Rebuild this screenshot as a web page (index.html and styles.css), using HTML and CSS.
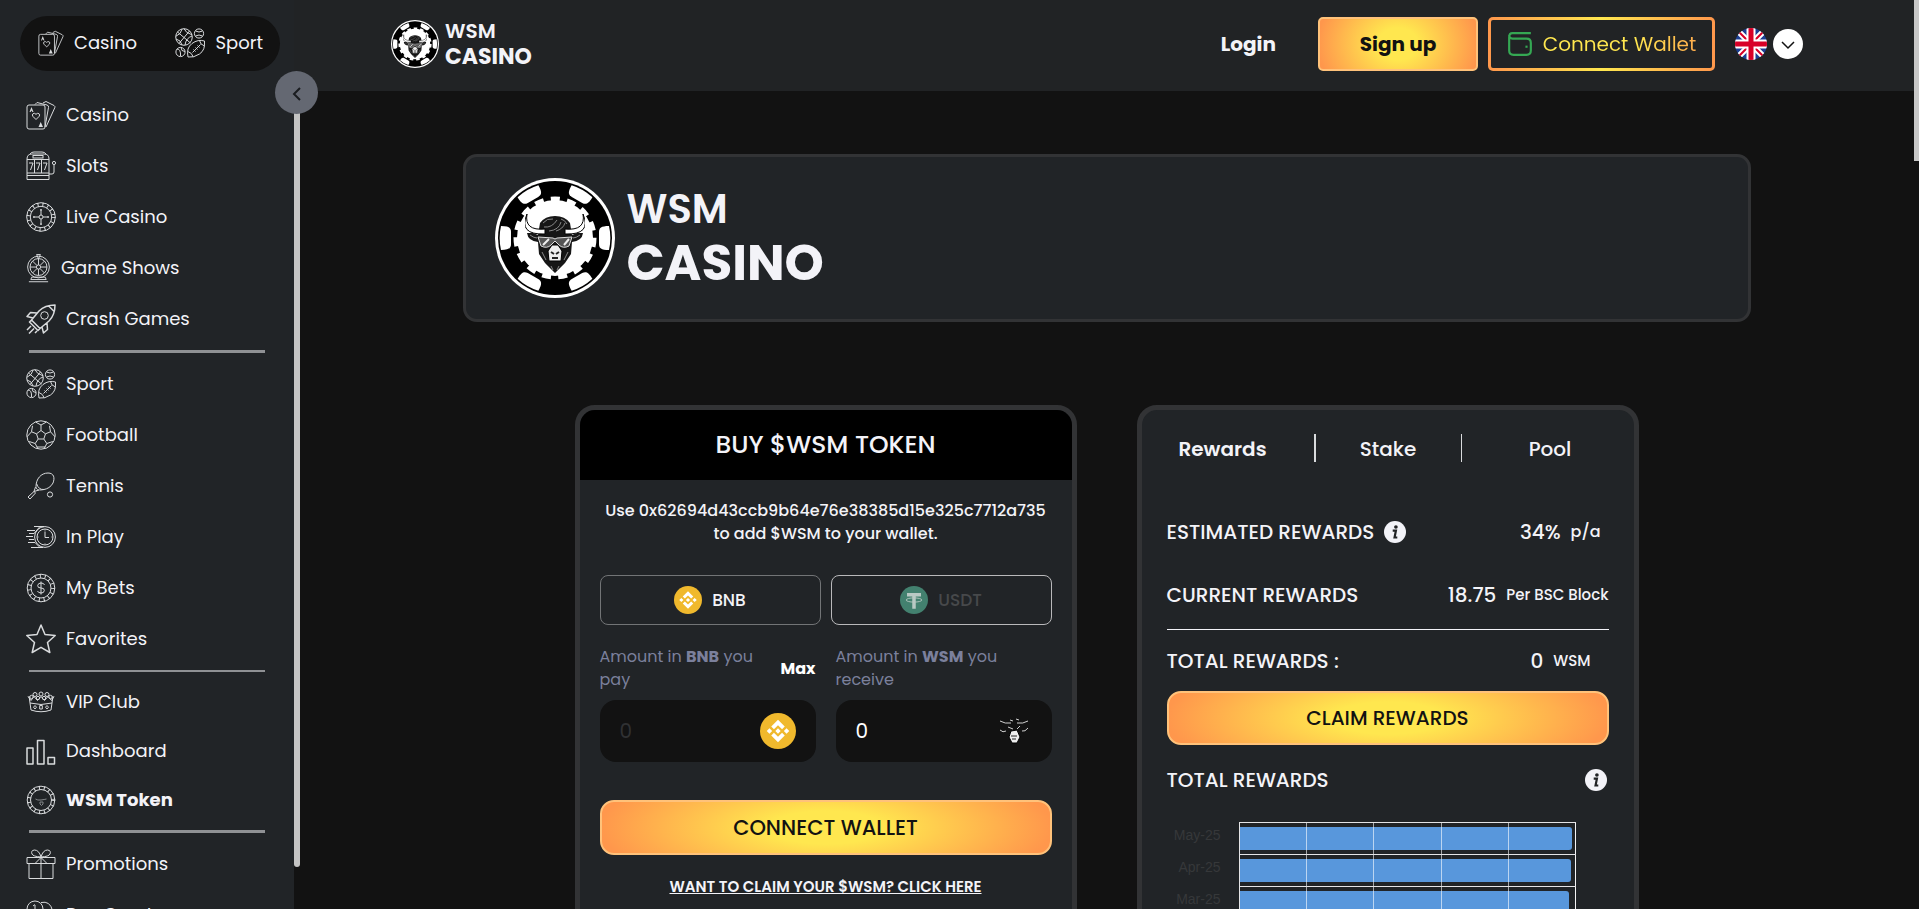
FILE: index.html
```html
<!DOCTYPE html>
<html lang="en">
<head>
    <meta charset="UTF-8">
    <meta name="viewport" content="width=device-width, initial-scale=1.0">
    <title>WSM Casino</title>
    <link rel="stylesheet" href="styles.css">
</head>
<body>
    <!-- icon sprite -->
    <svg class="sprite" aria-hidden="true">
        <symbol id="cards" viewBox="0 0 30 30">
            <rect x="1" y="5" width="18" height="24" rx="2"/>
            <path d="M9 4.500l2-2 10 2.500q2 .6 1.500 2.500L19 27M17 3l3-1.500 8 4q1.400.8.8 2.200L20 27"/>
            <path d="M10 19.500l-3-3q-1.400-1.700 0-2.800 1.600-1 3 .6 1.400-1.600 3-.6 1.400 1.100 0 2.800z"/>
            <path class="solid" d="M3.500 12l2-5 2 5h-1l-1-1.500-1 1.500zM12.500 27l2.200-5 2.300 5z"/>
        </symbol>
        <symbol id="sport" viewBox="0 0 30 30">
            <circle cx="9" cy="9" r="8.300"/>
            <path d="M2.500 4l13 11M4 15.500L14.500 3M7 1.200q-1 5-6 7M17 8q-6 2-7 9M9 .8q1.500 4 8 6M1 11q5 1 6 6"/>
            <circle cx="24" cy="5.500" r="4.600"/><path d="M20.500 3q3.500 2 7 0M20.500 8q3.500-2 7 0"/>
            <circle cx="5.500" cy="24" r="4.600"/><path d="M2 21q4 0 3.500 7M6 19.500q0 4 4 4"/>
            <path d="M13 29q-2-9 4-13.500T29.500 13q1 9-5 13T13 29zM17.500 24.500l8-8M18.500 21.500l2 2M20.500 19.500l2 2M22.500 17.500l2 2M12.800 23.500q4 1 5.500 5.500M24.500 12.500q.5 4 5 5.500"/>
        </symbol>
        <symbol id="slots" viewBox="0 0 30 30">
            <path d="M1 28.500V8q0-5 5-5h12q5 0 5 5v20.500zM1 8.500h22M1 22h22M1 24.500h22M4 3q1-2 4-2h8q3 0 4 2"/>
            <rect x="7" y="4.500" width="10" height="2.500"/>
            <path d="M3 12h4l-2.500 7M10 12h4l-2.500 7M17 12h4l-2.500 7M8.500 9v13M15.500 9v13M23 23h3q2 0 2-2v-7"/>
            <circle cx="28" cy="12" r="1.600"/>
        </symbol>
        <symbol id="roulette" viewBox="0 0 30 30">
            <circle cx="15" cy="15" r="14.300"/><circle cx="15" cy="15" r="10.700"/>
            <circle class="ticks" cx="15" cy="15" r="12.500"/>
            <circle cx="15" cy="15" r="2"/>
            <path d="M15 7v6M15 17v6M7 15h6M17 15h6M14 8h2M14 22h2M8 14v2M22 14v2"/>
        </symbol>
        <symbol id="wheel" viewBox="0 0 26 30">
            <circle cx="13" cy="14" r="11.300"/><circle cx="13" cy="14" r="8.800"/><circle cx="13" cy="14" r="2.200"/>
            <path d="M13 5.200v6.600M13 16.200v6.600M4.200 14h6.600M15.200 14h6.600M6.800 7.800l4.600 4.600M14.600 15.600l4.600 4.600M19.200 7.800l-4.600 4.600M11.400 15.600l-4.600 4.600M11 1h4l-2 4.500zM6 24.500h14l1 2.500H5zM3 29.300h20"/>
        </symbol>
        <symbol id="rocket" viewBox="0 0 30 30">
            <path class="bold" d="M29 1q-10 0-16 6L5.500 16l8.500 8.500L23 17q6-6 6-16zM22.500 1.800l5.700 5.700M11 9L4.500 8.500 1 12.500l6 1.500M21 19l.5 6.500-4 3.500-1.500-6M5.500 16L3.500 18l8.500 8.500 2-2M5 22l-4 4M8 24.500l-5 5M11 27l-2 2"/>
            <circle cx="18.500" cy="11.500" r="3.800"/>
        </symbol>
        <symbol id="football" viewBox="0 0 30 30">
            <circle cx="15" cy="15" r="14.200"/>
            <path d="M15 10.500l4.500 3.300-1.700 5.200h-5.600l-1.700-5.200zM15 10.500V5M19.500 13.800l5-2M17.800 19l3 4.500M12.200 19l-3 4.500M10.500 13.800l-5-2M9.500 2l5.500 3 5.500-3M24.500 11.800l-1-6M24.500 11.800l4.500 5M20.800 23.500l6-2M20.800 23.500L18 29M9.200 23.500L12 29M9.200 23.500l-6-2M5.500 11.800l-4.500 5M5.500 11.800l1-6M11 27h8"/>
        </symbol>
        <symbol id="tennis" viewBox="0 0 30 30">
            <path d="M22 2c6 0 7 5 5 10-2 4-6 6-9 6.500-4 .8-8 1-8-3C10 8 15 2 22 2zM10.500 12.500q2 6.500 7.500 6M9.500 16l-1.500 4.500 5-1.500M2 26l6-5.500 1.500 1.500L4 28z"/>
            <circle cx="24" cy="23.500" r="2.600"/>
        </symbol>
        <symbol id="inplay" viewBox="0 0 30 30">
            <circle cx="19" cy="15" r="10.400"/><circle cx="19" cy="15" r="8"/>
            <path d="M19 9.500V15.500l4 0M19 7.500v1M19 21.500v1M11.500 15h1M25.500 15h1M8 4.500h10M5 25.500h12M1 8.500h8M3 11.500h5M0 14.500h7M3 17.500h5M2 20.500h7M14 4.500L7.500 12M14 25.500l-5-5"/>
        </symbol>
        <symbol id="bets" viewBox="0 0 30 30">
            <circle cx="15" cy="15" r="13.800"/><circle cx="15" cy="15" r="10"/>
            <circle class="ticks" cx="15" cy="15" r="12"/>
            <path d="M18.500 12q-.5-2-3.500-2t-3.300 2.500T15 15t3.300 2.600T15 20t-3.500-2M15 8.500v13"/>
        </symbol>
        <symbol id="star" viewBox="0 0 30 30">
            <path class="bold" d="M15 1l4 9.500 10.200 1-7.700 7 2.300 10L15 23.300l-8.800 5.200 2.300-10-7.700-7 10.200-1z"/>
        </symbol>
        <symbol id="vip" viewBox="0 0 30 30">
            <path d="M3 9l2 14q10 3.500 20 0L27 9M4 16q11 3 22 0M2 9.500l3 4 3-4 3.500 4 3.500-4 3.500 4 3.500-4 3.500 4 2.500-4"/>
            <circle cx="9" cy="7.500" r="2"/><circle cx="15" cy="7" r="2"/><circle cx="21" cy="7.500" r="2"/>
            <circle cx="5.500" cy="10" r="1.700"/><circle cx="12" cy="11" r="1.700"/><circle cx="18" cy="11" r="1.700"/><circle cx="24.500" cy="10" r="1.700"/>
            <path d="M9 18.500l1.500 1.700L9 22l-1.500-1.800zM13.700 18.500h2.600V22h-2.600zM21 18.500l1.500 1.700L21 22l-1.500-1.800z"/>
        </symbol>
        <symbol id="bars" viewBox="0 0 30 30">
            <path class="bold" d="M1 12h6v16H1zM11.500 4.500H18V28h-6.500zM22 21.500h6.500V28H22z"/>
        </symbol>
        <symbol id="token" viewBox="0 0 30 30">
            <circle cx="15" cy="15" r="13.800"/><circle cx="15" cy="15" r="10.500"/>
            <circle class="ticks" cx="15" cy="15" r="12.200"/>
            <path class="faint" d="M9.500 14q2 1.500 5.500 1t5.500-1M14 17h3v2l-1.500 1.500L14 19z"/>
        </symbol>
        <symbol id="gift" viewBox="0 0 30 30">
            <path d="M1 8.500h28v6H1zM3 14.500h24v15H3zM15 8.500v21M15 8q-2-7-6.500-7-4 .5-2.500 4 1 2.500 9 3zM15 8q2-7 6.500-7 4 .5 2.500 4-1 2.500-9 3zM15 8.500L9.500 14M15 8.500l5.500 5.500"/>
        </symbol>
        <symbol id="crypto" viewBox="0 0 30 30">
            <circle cx="9" cy="9" r="8"/><path d="M15 2.500q9-2 11.500 8M9 5v8M7 6l2-1.500"/><circle cx="19" cy="20" r="9"/>
        </symbol>
        <symbol id="bull" viewBox="0 0 60 60">
            <path class="bull-fur" d="M15 9q5-7 15-7t15 7l2 12 5-2h6q-1 8-11 9l-1 12-6 9-10 10-10-10-6-9-1-12Q3 27 2 19h6l5 2z"/>
            <path class="bull-horn" d="M2 0q-3 17 18 15v5Q-7 21 2 0zM58 0q3 17-18 15v5Q67 21 58 0z"/>
            <path class="bull-hair" d="M18 9q4-5 10-4M19 13q8 1 13-7M24 17q10-1 12-9M31 17q7-2 9-8M36 5q4 1 6 5M5 21q4 3 7 3M55 21q-4 3-7 3M17 38l4 8M43 38l-4 8M26 52l2 4M34 52l-2 4"/>
            <path class="bull-glasses" d="M13 23l15 1 2 1 2-1 15-1-3 9q-6 3-10-1l-4-4-4 4q-4 4-10 1z"/>
            <path class="bull-glare" d="M18 31l6-6M39 31l5-6"/>
            <path class="bull-nose" d="M27 31h6l4 6-1 10H24l-1-10z"/>
            <path class="bull-hair dark" d="M26 38l3 2M34 38l-3 2M27 44h6"/>
        </symbol>
        <symbol id="bull-coin" viewBox="0 0 36 36">
            <path class="bull-coin-lines" d="M4 8q5 3 11 2M32 8q-5 3-11 2M4 17q3 3 6 1M32 15q-3 4-6 3M14 7l3 1M20 6l3 1M12 14l5 2M24 13l-3 3"/>
            <path class="bull-nose" d="M15 18l6-1 3 7-3 6h-5l-3-6z"/>
            <path class="bull-coin-dark" d="M15 23l6 0M16 26h4"/>
        </symbol>
        <symbol id="chip" viewBox="0 0 120 120">
            <circle cx="60" cy="60" r="60" fill="#fff"/>
            <circle cx="60" cy="60" r="57" fill="#000"/>
            <g fill="#fff">
                <path id="notch" d="M114 48a54 54 0 0 1 0 24c-8 0-10-2-10-6V54c0-4 2-6 10-6z"/>
                <use href="#notch" transform="rotate(60 60 60)"/>
                <use href="#notch" transform="rotate(120 60 60)"/>
                <use href="#notch" transform="rotate(180 60 60)"/>
                <use href="#notch" transform="rotate(240 60 60)"/>
                <use href="#notch" transform="rotate(300 60 60)"/>
            </g>
            <circle cx="60" cy="60" r="38" fill="#fff"/>
            <circle cx="60" cy="60" r="39" fill="none" stroke="#fff" stroke-width="5" stroke-dasharray="9 7.300"/>
            <use href="#bull" x="30" y="36" width="60" height="60"/>
        </symbol>
        <symbol id="bnb" viewBox="0 0 32 32">
            <circle cx="16" cy="16" r="16" fill="#f0b92d"/>
            <path fill="#fff" d="M16 6l6 6-2.400 2.400L16 10.800l-3.600 3.600L10 12zM16 26l-6-6 2.400-2.400 3.600 3.600 3.600-3.600L22 20zM8.400 13.600l2.400 2.400-2.400 2.400L6 16zM23.600 13.600L26 16l-2.400 2.400-2.400-2.400zM16 13.600l2.400 2.400-2.400 2.400-2.400-2.400z"/>
        </symbol>
        <symbol id="usdt" viewBox="0 0 32 32">
            <circle cx="16" cy="16" r="16" fill="#43816f"/>
            <path fill="#b9c9c4" d="M8 8h16v4h-6v14h-4V12H8z"/>
            <ellipse cx="16" cy="16" rx="9" ry="2.400" fill="none" stroke="#b9c9c4"/>
        </symbol>
        <symbol id="info" viewBox="0 0 24 24">
            <circle cx="12" cy="12" r="12" fill="#f3f3f8"/>
            <circle cx="13" cy="6.500" r="2" fill="#212325"/>
            <path d="M9.500 10.500h3.500l-1.500 7.500h3" fill="none" stroke="#212325" stroke-width="2.400"/>
        </symbol>
    </svg>

    <div class="app">
        <aside class="sidebar">
            <div class="switch">
                <a href="#"><svg class="icon small"><use href="#cards"/></svg>Casino</a>
                <a href="#"><svg class="icon"><use href="#sport"/></svg>Sport</a>
            </div>
            <nav>
                <ul class="menu">
                    <li><a href="#"><svg class="icon"><use href="#cards"/></svg>Casino</a></li>
                    <li><a href="#"><svg class="icon"><use href="#slots"/></svg>Slots</a></li>
                    <li><a href="#"><svg class="icon"><use href="#roulette"/></svg>Live Casino</a></li>
                    <li><a href="#"><svg class="icon narrow"><use href="#wheel"/></svg>Game Shows</a></li>
                    <li><a href="#"><svg class="icon"><use href="#rocket"/></svg>Crash Games</a></li>
                </ul>
                <ul class="menu">
                    <li><a href="#"><svg class="icon"><use href="#sport"/></svg>Sport</a></li>
                    <li><a href="#"><svg class="icon"><use href="#football"/></svg>Football</a></li>
                    <li><a href="#"><svg class="icon"><use href="#tennis"/></svg>Tennis</a></li>
                    <li><a href="#"><svg class="icon"><use href="#inplay"/></svg>In Play</a></li>
                    <li><a href="#"><svg class="icon"><use href="#bets"/></svg>My Bets</a></li>
                    <li><a href="#"><svg class="icon"><use href="#star"/></svg>Favorites</a></li>
                </ul>
                <ul class="menu tight">
                    <li><a href="#"><svg class="icon"><use href="#vip"/></svg>VIP Club</a></li>
                    <li><a href="#"><svg class="icon"><use href="#bars"/></svg>Dashboard</a></li>
                    <li><a href="#" class="active"><svg class="icon"><use href="#token"/></svg>WSM Token</a></li>
                </ul>
                <ul class="menu">
                    <li><a href="#"><svg class="icon"><use href="#gift"/></svg>Promotions</a></li>
                    <li><a href="#"><svg class="icon"><use href="#crypto"/></svg>Buy Crypto</a></li>
                </ul>
            </nav>
            <div class="sidebar-thumb"></div>
            <button class="collapse" aria-label="Collapse menu">
                <svg viewBox="0 0 12 16"><path d="M9 2L3 8l6 6"/></svg>
            </button>
        </aside>

        <div class="page">
            <header class="topbar">
                <a href="#" class="logo">
                    <svg class="logo-chip"><use href="#chip"/></svg>
                    <span class="logo-text">WSM<b>CASINO</b></span>
                </a>
                <div class="actions">
                    <a href="#" class="login">Login</a>
                    <button class="signup">Sign up</button>
                    <button class="wallet">
                        <svg viewBox="0 0 24 24"><path d="M22 2H5Q2 2 2 6v12q0 4 4 4h12q4 0 4-4v-7q0-4-4-4H5Q2 7 2 4"/><path d="M17 14.500h2"/></svg>
                        <span>Connect Wallet</span>
                    </button>
                    <div class="language">
                        <svg class="flag" viewBox="0 0 32 32">
                            <clipPath id="round"><circle cx="16" cy="16" r="16"/></clipPath>
                            <g clip-path="url(#round)">
                                <path fill="#1c3f94" d="M0 0h32v32H0z"/>
                                <path stroke="#fff" stroke-width="6" d="M0 0l32 32M32 0L0 32"/>
                                <path stroke="#d80027" stroke-width="2" d="M0 0l32 32M32 0L0 32"/>
                                <path stroke="#fff" stroke-width="9" d="M16 0v32M0 16h32"/>
                                <path stroke="#d80027" stroke-width="5" d="M16 0v32M0 16h32"/>
                            </g>
                        </svg>
                        <button class="language-toggle" aria-label="Choose language">
                            <svg viewBox="0 0 16 16"><path d="M2 5l6 6 6-6"/></svg>
                        </button>
                    </div>
                </div>
            </header>

            <main>
                <section class="banner">
                    <svg class="banner-chip"><use href="#chip"/></svg>
                    <h1>WSM<b>CASINO</b></h1>
                </section>

                <div class="cards">
                    <section class="card buy">
                        <h2>BUY $WSM TOKEN</h2>
                        <div class="buy-body">
                            <p class="address">Use 0x62694d43ccb9b64e76e38385d15e325c7712a735 to add $WSM to your wallet.</p>
                            <div class="coins">
                                <button class="coin"><svg><use href="#bnb"/></svg>BNB</button>
                                <button class="coin off"><svg><use href="#usdt"/></svg>USDT</button>
                            </div>
                            <div class="amounts">
                                <div class="amount">
                                    <div class="amount-label">
                                        <label for="pay">Amount in <b>BNB</b> you pay</label>
                                        <button class="max">Max</button>
                                    </div>
                                    <div class="field">
                                        <input type="text" id="pay" placeholder="0">
                                        <svg><use href="#bnb"/></svg>
                                    </div>
                                </div>
                                <div class="amount">
                                    <div class="amount-label">
                                        <label for="receive">Amount in <b>WSM</b> you<br>receive</label>
                                    </div>
                                    <div class="field">
                                        <input type="text" id="receive" value="0">
                                        <svg><use href="#bull-coin"/></svg>
                                    </div>
                                </div>
                            </div>
                            <button class="gold">CONNECT WALLET</button>
                            <a href="#" class="claim-link">WANT TO CLAIM YOUR $WSM? CLICK HERE</a>
                        </div>
                    </section>

                    <section class="card rewards">
                        <div class="tabs">
                            <button class="active">Rewards</button>
                            <button>Stake</button>
                            <button>Pool</button>
                        </div>
                        <div class="row">
                            <span>ESTIMATED REWARDS</span>
                            <svg class="info"><use href="#info"/></svg>
                            <span class="value">34%</span><small class="inset-small">p/a</small>
                        </div>
                        <div class="row">
                            <span>CURRENT REWARDS</span>
                            <span class="value">18.75</span><small>Per BSC Block</small>
                        </div>
                        <div class="row total">
                            <span>TOTAL REWARDS :</span>
                            <span class="value">0</span><small class="inset">WSM</small>
                        </div>
                        <button class="gold claim">CLAIM REWARDS</button>
                        <div class="chart-head">
                            <span>TOTAL REWARDS</span>
                            <svg class="info"><use href="#info"/></svg>
                        </div>
                        <div class="chart">
                            <div class="chart-row"><span>May-25</span><div class="plot"><i style="width: 99.300%"></i></div></div>
                            <div class="chart-row"><span>Apr-25</span><div class="plot"><i style="width: 98.900%"></i></div></div>
                            <div class="chart-row"><span>Mar-25</span><div class="plot"><i style="width: 98.500%"></i></div></div>
                        </div>
                    </section>
                </div>
            </main>
        </div>
    </div>
    <div class="page-thumb"></div>
</body>
</html>
```
FILE: styles.css
```css
* {
    box-sizing: border-box;
}
body {
    margin: 0;
    background: #121212;
    color: #f3f3f8;
    font-family: Poppins, Inter, "Liberation Sans", sans-serif;
    font-size: 18px;
}
a {
    color: inherit;
    text-decoration: none;
}
b {
    font-weight: 700;
}
button {
    font: inherit;
    color: inherit;
    background: none;
    border: none;
    padding: 0;
    cursor: pointer;
}
.sprite {
    position: absolute;
    width: 0;
    height: 0;
}
.app {
    display: flex;
    height: 100vh;
    overflow: hidden;
}

/* sidebar */
.sidebar {
    position: relative;
    flex: 0 0 294px;
    background: #212427;
    padding: 16px 14px 0 20px;
}
.switch {
    display: flex;
    align-items: center;
    justify-content: space-between;
    height: 55px;
    padding: 0 17px 2px 18px;
    border-radius: 28px;
    background: #121212;
}
.switch a {
    display: flex;
    align-items: center;
    gap: 10px;
}
.icon {
    flex: none;
    width: 30px;
    height: 30px;
    fill: none;
    stroke: #d9dbdd;
    stroke-width: 1;
}
.icon.small {
    width: 26px;
}
.icon.narrow {
    width: 25px;
}
.solid {
    fill: #d9dbdd;
    stroke: none;
}
.bold {
    stroke-width: 1.500;
    stroke-linejoin: round;
}
.faint {
    stroke: #85888b;
}
.ticks {
    stroke-width: 4;
    stroke-dasharray: 1 4;
}
nav {
    padding: 18px 15px 0 6px;
}
.menu {
    list-style: none;
    margin: 0;
    padding: 0 0 6px;
}
.menu + .menu {
    border-top: 3px solid #8f9194;
    margin-left: 3px;
    padding-top: 5px;
}
.menu + .menu li {
    margin-left: -3px;
}
.menu a {
    display: flex;
    align-items: center;
    gap: 10px;
    height: 51px;
}
.menu.tight {
    border-top-width: 2px;
}
.menu.tight a {
    height: 49px;
}
.menu .active {
    font-weight: 700;
}
.sidebar-thumb {
    position: absolute;
    top: 91px;
    right: -6px;
    bottom: 42px;
    width: 6px;
    border-radius: 3px;
    background: #c4c4c4;
}
.collapse {
    position: absolute;
    top: 71px;
    right: -24px;
    width: 43px;
    height: 43px;
    border-radius: 50%;
    background: #646872;
    z-index: 2;
}
.collapse svg {
    width: 12px;
    height: 16px;
    fill: none;
    stroke: #1a1c20;
    stroke-width: 2;
    vertical-align: middle;
}

/* top bar */
.page {
    flex: 1;
    min-width: 0;
}
.topbar {
    display: flex;
    align-items: center;
    justify-content: space-between;
    height: 91px;
    padding: 0 116px 4px 97px;
    background: #212325;
}
.logo {
    display: flex;
    align-items: center;
    gap: 6px;
}
.logo-chip {
    width: 48px;
    height: 48px;
}
.logo-text {
    font-size: 20px;
    font-weight: 600;
    line-height: 25px;
}
.logo-text b {
    display: block;
    font-size: 22px;
}
.actions {
    display: flex;
    align-items: center;
    gap: 10px;
}
.login {
    margin-right: 32px;
    font-size: 20px;
    font-weight: 700;
}
.signup, .gold {
    border: 2px solid #ffc27a;
    background: radial-gradient(50% 120% at center, #ffe74f 25%, #ff974c 100%) border-box;
    color: #121212;
}
.signup {
    width: 160px;
    height: 54px;
    border-radius: 5px;
    font-size: 20px;
    font-weight: 700;
}
.wallet {
    display: flex;
    align-items: center;
    justify-content: center;
    gap: 10px;
    width: 227px;
    height: 54px;
    border: 3px solid transparent;
    border-radius: 5px;
    background: linear-gradient(#212325, #212325) padding-box, linear-gradient(to right, #ff974c, #ffe74f, #ff974c) border-box;
    font-size: 20px;
}
.wallet svg {
    width: 26px;
    height: 26px;
    fill: none;
    stroke: #35a853;
    stroke-width: 2;
}
.wallet span {
    background: linear-gradient(to right, #ffe74f 60%, #ffad4d);
    background-clip: text;
    color: transparent;
}
.language {
    display: flex;
    align-items: center;
    gap: 6px;
    margin-left: 10px;
}
.flag {
    width: 32px;
    height: 32px;
}
.language-toggle {
    width: 30px;
    height: 30px;
    border-radius: 50%;
    background: #fff;
}
.language-toggle svg {
    width: 16px;
    height: 16px;
    fill: none;
    stroke: #121212;
    stroke-width: 1.500;
    vertical-align: middle;
}
.page-thumb {
    position: fixed;
    top: 0;
    right: 0;
    width: 5px;
    height: 161px;
    background: #c8c8c8;
}

/* banner */
main {
    padding: 63px 40px 0;
}
.banner {
    display: flex;
    align-items: center;
    gap: 12px;
    max-width: 1288px;
    height: 168px;
    margin: 0 auto 83px;
    padding: 0 29px;
    border: 3px solid #323335;
    border-radius: 14px;
    background: #212427;
}
.banner-chip {
    width: 120px;
    height: 120px;
}
.banner h1 {
    margin: 0;
    padding-bottom: 5px;
    font-size: 40px;
    font-weight: 600;
    line-height: 54px;
}
.banner b {
    display: block;
    font-size: 50px;
}

/* cards */
.cards {
    display: grid;
    grid-template-columns: 1fr 1fr;
    gap: 60px;
    max-width: 1064px;
    margin: 0 auto;
}
.card {
    border: 5px solid #323335;
    border-radius: 20px;
    background: #212427;
    overflow: hidden;
}
.buy h2 {
    margin: 0;
    background: #000;
    font-size: 25px;
    font-weight: 500;
    line-height: 70px;
    text-align: center;
}
.buy-body {
    padding: 19px 20px 40px;
}
.address {
    margin: 0 0 30px;
    font-size: 16px;
    font-weight: 500;
    line-height: 23px;
    text-align: center;
}
.coins {
    display: grid;
    grid-template-columns: 1fr 1fr;
    gap: 10px;
}
.coin {
    display: flex;
    align-items: center;
    justify-content: center;
    gap: 10px;
    height: 50px;
    border: 1px solid #727476;
    border-radius: 8px;
    font-size: 17px;
    font-weight: 500;
}
.coin.off {
    border-color: #b9b9bb;
    color: #47494b;
}
.coin svg {
    width: 28px;
    height: 28px;
}
.amounts {
    display: grid;
    grid-template-columns: minmax(0, 1fr) minmax(0, 1fr);
    gap: 20px;
    margin: 20px 0 38px;
}
.amount-label {
    display: flex;
    align-items: center;
    justify-content: space-between;
    gap: 20px;
    height: 46px;
    color: #7b809c;
    font-size: 16px;
    line-height: 23px;
}
.max {
    color: #fff;
    font-weight: 700;
}
.field {
    display: flex;
    align-items: center;
    height: 62px;
    margin-top: 9px;
    padding: 0 20px;
    border-radius: 16px;
    background: #121212;
}
.field input {
    flex: 1;
    width: 100%;
    min-width: 0;
    padding: 0;
    border: none;
    outline: none;
    background: none;
    color: #fff;
    font: inherit;
    font-size: 20px;
}
.field input::placeholder {
    color: #303133;
}
.field svg {
    flex: none;
    width: 36px;
    height: 36px;
}
.gold {
    display: block;
    width: 100%;
    height: 55px;
    border-radius: 14px;
    font-size: 21px;
    font-weight: 500;
}
.gold.claim {
    height: 54px;
    font-size: 20px;
}
.claim-link {
    display: block;
    margin-top: 20px;
    font-size: 15px;
    font-weight: 600;
    line-height: 23px;
    text-align: center;
    text-decoration: underline;
}

/* rewards */
.rewards {
    padding: 24px 25px 0;
    font-size: 20px;
    font-weight: 500;
}
.tabs {
    display: grid;
    grid-template-columns: 147px 147px 1fr;
    margin-bottom: 38px;
}
.tabs button {
    height: 28px;
}
.tabs button + button {
    border-left: 1px solid #d9dbdd;
}
.tabs .active {
    padding-right: 35px;
    font-weight: 600;
}
.tabs .active + button {
    border-left-width: 2px;
}
.tabs button:last-child {
    padding-left: 30px;
}
.row {
    display: flex;
    align-items: center;
    height: 63px;
}
.value {
    margin-left: auto;
}
.row small {
    margin-left: 10px;
    font-size: 15px;
}
.row .inset {
    padding-right: 18px;
}
.row .inset-small {
    padding-right: 8px;
    font-size: 16px;
}
.row.total {
    height: 62px;
    margin-top: 3px;
    border-top: 1px solid #f3f3f8;
}
.info {
    width: 22px;
    height: 22px;
}
.row .info {
    margin-left: 10px;
}
.chart-head {
    display: flex;
    align-items: center;
    justify-content: space-between;
    height: 77px;
    padding: 0 2px 7px 0;
}

/* bar chart */
.chart-row {
    display: flex;
    align-items: center;
    height: 32px;
    font-family: "Liberation Sans", Arial, sans-serif;
    font-size: 14px;
    font-weight: 400;
    color: #36383a;
}
.chart-row span {
    flex: 0 0 54px;
    height: 22px;
    text-align: right;
}
.plot {
    position: relative;
    flex: 1;
    height: 32px;
    margin: 0 33px 0 18px;
    border: 1px solid #e4e4e6;
    border-bottom: none;
    padding-top: 4px;
}
.plot::after {
    content: "";
    position: absolute;
    inset: 0 -1px 0 0;
    background: repeating-linear-gradient(to right, transparent 0 19.700%, rgba(255, 255, 255, 0.6) 19.700% 20%);
}
.plot i {
    display: block;
    height: 23px;
    border-radius: 0 3px 3px 0;
    background: #5897dc;
}

/* bull drawing */
.bull-horn {
    fill: #fff;
    stroke: #000;
    stroke-width: 1;
}
.bull-fur {
    fill: #161616;
}
.bull-hair {
    fill: none;
    stroke: #888;
    stroke-width: 1;
}
.bull-glasses {
    fill: #555;
    stroke: #ddd;
    stroke-width: 1;
}
.bull-glare {
    stroke: #eee;
    stroke-width: 2;
}
.bull-nose {
    fill: #eee;
    stroke: #000;
    stroke-width: 1;
}
.bull-hair.dark {
    stroke: #222;
    stroke-width: 2;
}
.bull-coin-lines {
    fill: none;
    stroke: #d0d0d0;
    stroke-width: 1;
}
.bull-coin-dark {
    stroke: #222;
    stroke-width: 1;
}
```
